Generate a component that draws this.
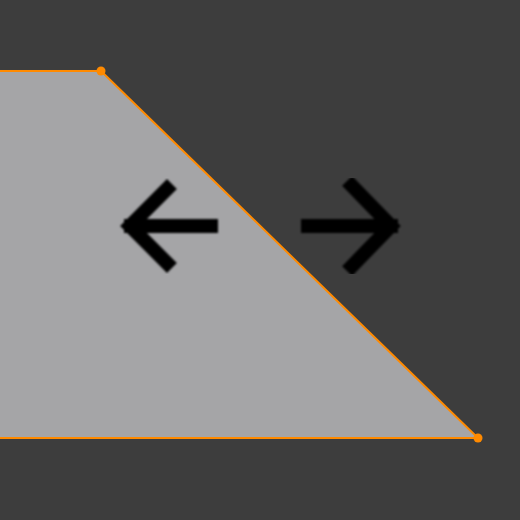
export default function App() {
  return (
    <div className="w-[520px] h-[520px] bg-[#3d3d3d] overflow-hidden">
      <svg width="520" height="520" viewBox="0 0 520 520" className="block">
        <defs>
          <filter id="soft" x="-10%" y="-10%" width="120%" height="120%">
            <feGaussianBlur stdDeviation="0.8" />
          </filter>
        </defs>
        <polygon points="0,71 101,71 478,438 0,438" fill="#a5a5a7" />
        <polyline points="0,71 101,71 478,438 0,438" fill="none" stroke="#ff8a00" strokeWidth="2" />
        <circle cx="101" cy="71" r="4.5" fill="#ff8a00" />
        <circle cx="478" cy="438" r="4.5" fill="#ff8a00" />
        <g stroke="#000" strokeWidth="14" fill="none" strokeLinecap="square" strokeLinejoin="miter" filter="url(#soft)">
          <path d="M211 226 H131 M167 189 L130 226 L167 263" />
          <path d="M308 226 H391 M352 186 L391 226 L352 266" />
        </g>
      </svg>
    </div>
  );
}
